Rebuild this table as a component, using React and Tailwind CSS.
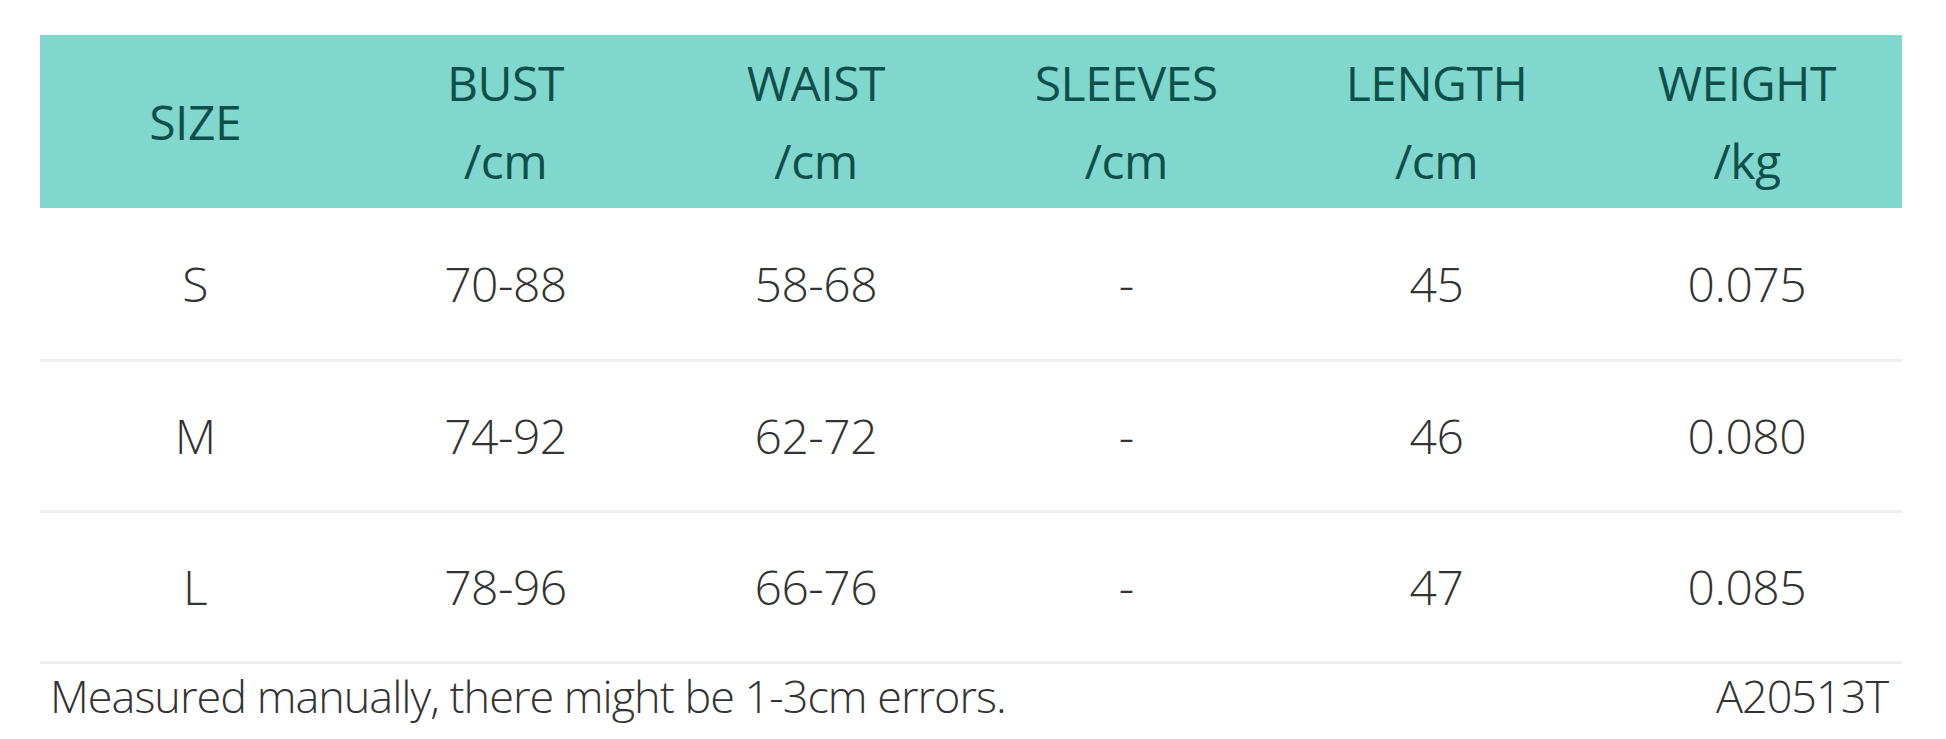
const headers = [
  ['SIZE'],
  ['BUST', '/cm'],
  ['WAIST', '/cm'],
  ['SLEEVES', '/cm'],
  ['LENGTH', '/cm'],
  ['WEIGHT', '/kg'],
];

const rows = [
  ['S', '70-88', '58-68', '-', '45', '0.075'],
  ['M', '74-92', '62-72', '-', '46', '0.080'],
  ['L', '78-96', '66-76', '-', '47', '0.085'],
];

export default function App() {
  return (
    <div
      className="w-[1946px] h-[739px] bg-white pt-[35px] pl-[40px] pr-[44px] overflow-hidden"
      style={{ fontFamily: '"Open Sans", "Noto Sans", sans-serif' }}
    >
      {/* header band */}
      <div className="grid grid-cols-6 h-[173px] bg-[#80d7cd] text-[#0f4f4b] text-[48px] tracking-[-0.5px]">
        {headers.map((h) => (
          <div key={h[0]} className="flex flex-col items-center justify-center leading-[78px]">
            {h.map((line) => (
              <span key={line}>{line}</span>
            ))}
          </div>
        ))}
      </div>

      {/* size rows */}
      {rows.map((r, i) => (
        <div
          key={r[0]}
          className={
            'grid grid-cols-6 text-[#333333] text-[48px] font-light tracking-[-0.5px] border-b-[3px] border-[#efefef]' +
            (i === 0 ? ' h-[154px]' : ' h-[151px]')
          }
        >
          {r.map((c, j) => (
            <div key={j} className="flex items-center justify-center">
              {c}
            </div>
          ))}
        </div>
      ))}

      <div className="flex justify-between items-center pl-[10px] pr-[14px] h-[64px] text-[#333333] text-[45px] font-light tracking-[-1px]">
        <span>Measured manually, there might be 1-3cm errors.</span>
        <span>A20513T</span>
      </div>
    </div>
  );
}
